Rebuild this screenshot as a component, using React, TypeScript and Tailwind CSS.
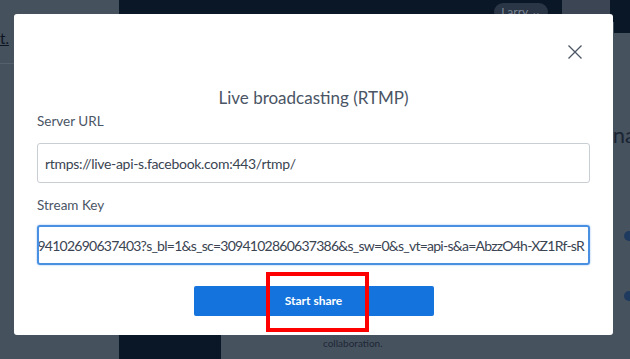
import React from "react";

export default function App() {
  const font = { fontFamily: "Lato, 'Open Sans', sans-serif" };
  return (
    <div className="relative w-[630px] h-[359px] overflow-hidden bg-[#46515e]" style={font}>
      {/* background page */}
      <div className="flex h-full">
        <div className="w-[119px] flex flex-col bg-[#46515e]">
          <div className="h-[64px] border-b border-[#56606c] pt-[26px]">
            <span className="text-[15px] text-[#0d1522] underline">t.</span>
          </div>
        </div>
        <div className="w-[102px] bg-[#0a1727]" />
        <div className="flex-1 flex flex-col bg-[#47525f]">
          <div className="h-[22px] bg-[#0a1727] flex justify-end items-start gap-[14px] pr-[20px]">
            <div className="mt-[3px] h-[18px] px-[7px] rounded-full bg-[#2a3545] text-[12px] text-[#7c8695] flex items-center">Larry ⌄</div>
            <div className="w-[48px] h-[22px] bg-[#3b4553]" />
          </div>
          <div className="flex-1 flex flex-col items-end">
            <div className="w-[16px] h-[11px] bg-[#0a1727]" />
            <div className="mt-[85px] text-[22px] text-[#1a2433] mr-[-6px]">na</div>
            <div className="mt-[80px] mr-[-4px] w-[10px] h-[10px] rounded-full bg-[#1f3a5f]" />
            <div className="mt-[50px] mr-[-4px] w-[10px] h-[10px] rounded-full bg-[#1f3a5f]" />
          </div>
          <div className="h-[24px] pl-[102px] text-[10px] leading-[12px] pt-[2px] text-[#1d2735]">collaboration.</div>
        </div>
      </div>

      {/* modal */}
      <div className="absolute left-[14px] top-[14px] w-[599px] h-[321px] bg-white rounded-[3px] flex flex-col px-[23px]">
        <div className="flex justify-end pt-[31px] pr-[8px]">
          <svg width="14" height="14" viewBox="0 0 14 14" fill="none" stroke="#4b5563" strokeWidth="1.3">
            <path d="M0.5 0.5 L13.5 13.5 M13.5 0.5 L0.5 13.5" />
          </svg>
        </div>
        <div className="mt-[28px] text-center text-[17px] leading-[22px] text-[#4a5565]">Live broadcasting (RTMP)</div>
        <div className="mt-[2px] text-[13.5px] leading-[20px] text-[#4a5565]">Server URL</div>
        <div className="mt-[12px] h-[40px] border border-[#c9ced5] rounded-[3px] flex items-center px-[7px] text-[14px] tracking-[-0.3px] text-[#3a4452] whitespace-nowrap overflow-hidden">
          rtmps://live-api-s.facebook.com:443/rtmp/
        </div>
        <div className="mt-[12px] text-[13.5px] leading-[20px] text-[#4a5565]">Stream Key</div>
        <div className="mt-[10px] h-[40px] border-2 border-[#4a90e2] rounded-[3px] shadow-[0_0_2px_#8bb8ee] flex items-center justify-end px-[4px] text-[14px] tracking-[-0.75px] text-[#3a4452] whitespace-nowrap overflow-hidden">
          <span className="shrink-0">94102690637403?s_bl=1&amp;s_sc=3094102860637386&amp;s_sw=0&amp;s_vt=api-s&amp;a=AbzzO4h-XZ1Rf-sR</span>
        </div>
        <button className="mt-[21px] self-center w-[240px] h-[30px] rounded-[2px] bg-[#1473dc] text-white text-[12px] font-bold">
          Start share
        </button>
      </div>

      {/* red highlight */}
      <div className="absolute left-[266px] top-[272px] w-[103px] h-[60px] border-[4px] border-[#ff0000]" />
    </div>
  );
}
